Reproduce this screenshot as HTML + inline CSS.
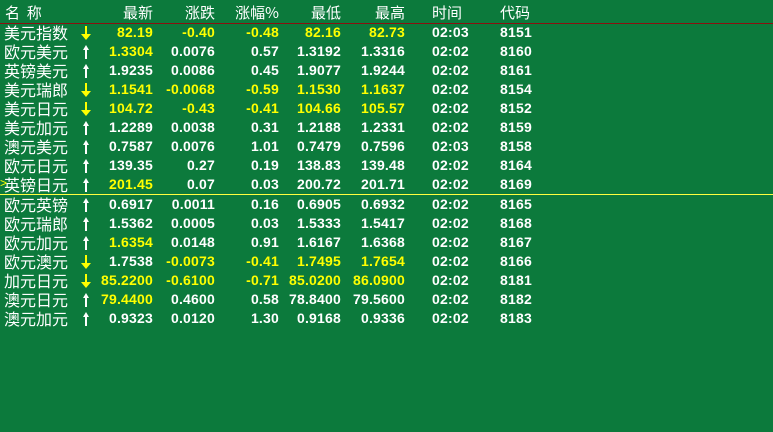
<!DOCTYPE html>
<html><head><meta charset="utf-8"><style>
body{margin:0;width:773px;height:432px;overflow:hidden;background:#0c7a3c;position:relative;font-family:"Liberation Sans","WenQuanYi Zen Hei",sans-serif;}
.r{position:absolute;left:0;width:773px;height:19px;}
.r span{position:absolute;top:0;line-height:19px;white-space:nowrap;}
.n{left:4px;font-size:16px;color:#fff;font-family:"WenQuanYi Zen Hei","Noto Sans CJK SC",sans-serif;}
.r svg{position:absolute;left:81px;top:2px}
.c{font-size:14px;font-weight:bold;text-align:right;letter-spacing:0.2px}
.c1{right:620px}.c2{right:558px}.c3{right:494px}.c4{right:432px}.c5{right:368px}
.c6{left:432px;text-align:left!important}.c7{left:500px;text-align:left!important}
.w{color:#fff}.y{color:#ffff00}
.h span{font-family:"WenQuanYi Zen Hei","Noto Sans CJK SC",sans-serif;font-weight:normal;font-size:15px;color:#fff;letter-spacing:0}
</style></head><body>
<div style="position:absolute;left:0;top:23px;width:773px;height:1px;background:#8a1010"></div>
<div style="position:absolute;left:0;top:194px;width:773px;height:1px;background:#ffff40"></div>
<div class="r h" style="top:3px"><span class="n" style="left:5px">名&nbsp;&nbsp;称</span><span class="c c1">最新</span><span class="c c2">涨跌</span><span class="c c3">涨幅%</span><span class="c c4">最低</span><span class="c c5">最高</span><span class="c c6">时间</span><span class="c c7">代码</span></div>
<div id="rows"></div>
<span style="position:absolute;left:0;top:176px;color:#ff0;font-size:12px">&gt;</span>
<script>
var d=[
["美元指数",1,"82.19","-0.40","-0.48","82.16","82.73","02:03","8151"],
["欧元美元",0,"1.3304","0.0076","0.57","1.3192","1.3316","02:02","8160"],
["英镑美元",0,"1.9235","0.0086","0.45","1.9077","1.9244","02:02","8161"],
["美元瑞郎",1,"1.1541","-0.0068","-0.59","1.1530","1.1637","02:02","8154"],
["美元日元",1,"104.72","-0.43","-0.41","104.66","105.57","02:02","8152"],
["美元加元",0,"1.2289","0.0038","0.31","1.2188","1.2331","02:02","8159"],
["澳元美元",0,"0.7587","0.0076","1.01","0.7479","0.7596","02:03","8158"],
["欧元日元",0,"139.35","0.27","0.19","138.83","139.48","02:02","8164"],
["英镑日元",0,"201.45","0.07","0.03","200.72","201.71","02:02","8169"],
["欧元英镑",0,"0.6917","0.0011","0.16","0.6905","0.6932","02:02","8165"],
["欧元瑞郎",0,"1.5362","0.0005","0.03","1.5333","1.5417","02:02","8168"],
["欧元加元",0,"1.6354","0.0148","0.91","1.6167","1.6368","02:02","8167"],
["欧元澳元",1,"1.7538","-0.0073","-0.41","1.7495","1.7654","02:02","8166"],
["加元日元",1,"85.2200","-0.6100","-0.71","85.0200","86.0900","02:02","8181"],
["澳元日元",0,"79.4400","0.4600","0.58","78.8400","79.5600","02:02","8182"],
["澳元加元",0,"0.9323","0.0120","1.30","0.9168","0.9336","02:02","8183"]];
var cols=[
"yyyyyww","ywwwwww","wwwwwww","yyyyyww","yyyyyww","wwwwwww","wwwwwww","wwwwwww","ywwwwww",
"wwwwwww","wwwwwww","ywwwwww","wyyyyww","yyyyyww","ywwwwww","wwwwwww"];
var dn='<svg width="10" height="16"><rect x="4" y="1" width="2" height="10" fill="#ff0"/><path d="M0 9 L10 9 L5 15 Z" fill="#ff0"/></svg>';
var up='<svg width="10" height="16"><rect x="4" y="4" width="2" height="11" fill="#fff"/><path d="M2 6 L8 6 L5 1 Z" fill="#fff"/></svg>';
var h="";
for(var i=0;i<d.length;i++){var r=d[i];var t=23+i*19+(i>=9?1:0);var c=cols[i];
h+='<div class="r" style="top:'+t+'px"><span class="n">'+r[0]+'</span>'+(r[1]?dn:up);
for(var j=0;j<7;j++)h+='<span class="c c'+(j+1)+' '+c[j]+'">'+r[j+2]+'</span>';
h+='</div>';}
document.getElementById('rows').innerHTML=h;
</script>
</body></html>
